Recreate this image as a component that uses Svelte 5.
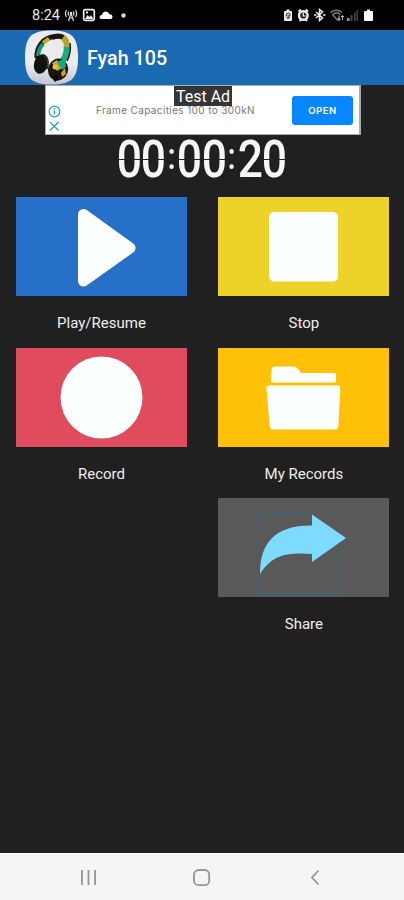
<script>
	let elapsed = '00:00:20';

	const tiles = [
		{ id: 'play', label: 'Play/Resume' },
		{ id: 'stop', label: 'Stop' },
		{ id: 'record', label: 'Record' },
		{ id: 'files', label: 'My Records' },
		{ id: 'share', label: 'Share' }
	];
</script>

<div class="screen">
	<div class="status">
		<span class="time">8:24</span>
		<svg class="left-icons" width="70" height="14" viewBox="0 0 70 14">
			<g fill="none" stroke="#ddd" stroke-width="1.2">
				<path d="M2.5 2Q.3 5.5 2.5 9M11.500 2Q13.700 5.500 11.500 9M4.700 3.500Q3.600 5.500 4.700 7.500M9.300 3.500Q10.400 5.500 9.300 7.500" />
				<path d="M7 5L4.500 13M7 5l2.500 8M5.500 10h3" />
			</g>
			<circle cx="7" cy="5" r="1.300" fill="#ddd" />
			<rect x="19.700" y="1.700" width="10.600" height="10.600" rx="1.500" fill="none" stroke="#eee" stroke-width="1.700" />
			<path d="M21 11l2.500-4 2 2 1.500-2 2.500 4zM22 3.500h2v2h-2z" fill="#eee" />
			<path d="M37.500 11q-2 0-2-2t2.500-2q.7-3.500 4-3.500 2.500 0 3.300 2.800 3.200.2 3.200 2.700 0 2-2 2z" fill="#fff" />
			<circle cx="59.500" cy="7.500" r="2.200" fill="#ddd" />
		</svg>
		<svg class="right-icons" width="94" height="14" viewBox="0 0 94 14">
			<path d="M4 3h1.500V1.500h3V3H10q1 0 1 1v8q0 1-1 1H4q-1 0-1-1V4q0-1 1-1z" fill="#eee" />
			<path d="M5 8.500Q5 5 7.300 5T9 8.500M7.200 7v3H5.500M7.200 10H9" fill="none" stroke="#222" />
			<circle cx="22.300" cy="7.500" r="4.300" fill="#222" stroke="#eee" stroke-width="2.400" />
			<path d="M17.500 3.500l2.300-2M27 3.500l-2.300-2M18.500 13l1.500-1.500M26 13l-1.500-1.500" stroke="#eee" stroke-width="1.800" />
			<path d="M22.300 5v3h2.200" fill="none" stroke="#fff" stroke-width="1.200" />
			<path d="M35 4l6.500 6L38.500 12.500V1.500l3 2.500L35 10M33 7h2.500M42 7h2.500" fill="none" stroke="#eee" stroke-width="1.500" />
			<g fill="none" stroke="#777" stroke-width="1.500">
				<path d="M49.500 4.500q6-4.500 11.500 0M51.500 6.500q4-3.500 8 0M51.500 6.500l5 5.500 2-2" />
			</g>
			<path d="M58 7.500v5M56.500 11l1.500 1.500 1.500-1.500M61.500 12V7.500M60 9l1.500-1.500L63 9" fill="none" stroke="#bbb" />
			<path d="M66 10h2.500v3H66z" fill="#999" />
			<path d="M69.500 7h2v6h-2zM73 4.500h1.700V13H73zM75.500 2H77v11h-1.500z" fill="#444" />
			<path d="M84 3h2V1.500h3V3h2q1 0 1 1v8q0 1-1 1h-7q-1 0-1-1V4q0-1 1-1z" fill="#fff" />
		</svg>
	</div>

	<header>
		<svg class="logo" width="55" height="55" viewBox="0 0 55 55">
			<defs>
				<linearGradient id="plate" x1="0" y1="0" x2="0" y2="1">
					<stop offset="0" stop-color="#e9e9ee" />
					<stop offset=".6" stop-color="#ededf0" />
					<stop offset="1" stop-color="#c3c4d0" />
				</linearGradient>
			</defs>
			<path d="M27.500.5C48 .5 54 7 54 27.500S48 54.500 27.500 54.500 1 48 1 27.500 7 .5 27.500.5z" fill="url(#plate)" />
			<g fill="none" stroke-width="5">
				<path d="M13 28C12 17 20 7 31 6.500" stroke="#171611" />
				<path d="M14 26Q14.500 19 19 14" stroke="#16977c" stroke-width="4" />
				<path d="M19 13L25 8.500" stroke="#c2a92d" stroke-width="4" />
				<path d="M28 7.500Q35 4.500 40 8" stroke="#161711" />
				<path d="M39 7.500Q44 11 42.500 20" stroke="#b6a22c" stroke-width="6" />
				<path d="M43 17Q43 26 36 34" stroke="#16ad83" stroke-width="6" />
				<path d="M46 13Q47.500 22 43 31" stroke="#111c17" stroke-width="1.500" />
			</g>
			<ellipse cx="17" cy="34" rx="7" ry="10" transform="rotate(15 17 34)" fill="#111" />
			<path d="M20 25q6 4 3 14" fill="none" stroke="#29372f" stroke-width="2" />
			<ellipse cx="34" cy="39.500" rx="10" ry="11" transform="rotate(20 34 39.500)" fill="#17150e" />
			<path d="M28 33l5-3 5 8-5 3zM37 43l4-5 1 6-4 3z" fill="#c8a52b" />
			<path d="M33 32l8-4 1 9-4 3z" fill="#16a77f" />
			<circle cx="31" cy="37" r="2.500" fill="#efbd42" />
			<path d="M28 48l4-3 3 4-4 3z" fill="#070707" />
		</svg>
		<h1>Fyah 105</h1>
	</header>

	<div class="ad">
		<svg class="ad-marks" width="14" height="28" viewBox="0 0 14 28" fill="none" stroke="#24a9b8">
			<circle cx="6.500" cy="6.500" r="5.300" stroke-width="1.200" />
			<path d="M6.500 5.500v4M6.500 3v1.400" stroke-width="1.600" />
			<path d="M2 17l8.500 8.500M10.500 17L2 25.500" stroke-width="1.400" />
		</svg>
		<span class="ad-text">Frame Capacities 100 to 300kN</span>
		<button class="open">OPEN</button>
		<span class="test">Test Ad</span>
	</div>

	<div class="timer">
		{#each elapsed.split('') as char}
			<span class:colon={char === ':'} class:zero={char === '0'}>{char}</span>
		{/each}
	</div>

	<main>
		{#each tiles as tile}
			<div class="item {tile.id}">
				<div class="tile">
					<svg width="171" height="99" viewBox="0 0 171 99">
						{#if tile.id === 'play'}
							<path d="M67.500 17.500L114 51 67.500 84z" fill="#fcffff" stroke="#fcffff" stroke-width="11" stroke-linejoin="round" />
						{:else if tile.id === 'stop'}
							<rect x="51" y="15" width="69" height="69.500" rx="5" fill="#fcffff" />
						{:else if tile.id === 'record'}
							<circle cx="85.500" cy="49.500" r="41" fill="#fcffff" />
						{:else if tile.id === 'files'}
							<path d="M53 34.500l.7-13q.2-3 3.200-3h19q2 0 3.500 2l4 4.500H116q2 0 2 2v7.500z" fill="#fcffff" />
							<path d="M50.500 37.500h69q3 0 2.800 3l-2 38q-.3 3-3.300 3H55q-3 0-3.200-3l-3.300-38q-.3-3 2-3z" fill="#fcffff" />
						{:else}
							<path d="M40 32V15H94M40 80V96h82V55" fill="none" stroke="#49616f" stroke-width="2" />
							<path d="M42 76C42 44 58 27 94 27.500V16.500L128 40 94 64V56C69 54 54 57 42 76z" fill="#7cdbff" />
						{/if}
					</svg>
				</div>
				<p>{tile.label}</p>
			</div>
		{/each}
	</main>

	<nav>
		<svg width="404" height="46" viewBox="0 0 404 46" fill="none" stroke="#949494" stroke-width="1.800">
			<path d="M82 16v15M88.500 16v15M95 16v15" />
			<rect x="194" y="16" width="15.200" height="15.200" rx="4.800" />
			<path d="M318.500 16.500L312 23.500l6.500 7" />
		</svg>
	</nav>
</div>

<style>
	:global(body) {
		margin: 0;
		background: #202020;
	}

	.screen {
		width: 404px;
		height: 900px;
		display: flex;
		flex-direction: column;
		overflow: hidden;
		background: #202020;
		color: #fff;
		font-family: Roboto, sans-serif;
	}

	svg {
		display: block;
	}

	.status {
		height: 30px;
		display: flex;
		align-items: center;
		background: #000;
		padding: 0 29px 0 32px;
		box-sizing: border-box;
	}

	.time {
		width: 32px;
		font-size: 14.500px;
		color: #e8e8e8;
	}

	.right-icons {
		margin-left: auto;
	}

	header {
		height: 55px;
		display: flex;
		align-items: center;
		background: #1a6ab2;
		padding-left: 24px;
	}

	h1 {
		margin: 2px 0 0 8px;
		font-size: 19.700px;
		font-weight: 500;
		line-height: 24px;
	}

	.ad {
		position: relative;
		width: 316px;
		height: 50px;
		margin-left: 45px;
		box-sizing: border-box;
		border: 1px solid #aaa;
		border-width: 1px 2px 1px 1px;
		background: #fff;
		display: flex;
		align-items: center;
		padding: 0 6px 0 2px;
	}

	.ad-marks {
		margin-top: 18px;
	}

	.ad-text {
		margin: 0 0 1px 34px;
		font-family: Inter, sans-serif;
		font-size: 10px;
		letter-spacing: 0.37px;
		color: #777;
		white-space: nowrap;
	}

	.open {
		width: 61px;
		height: 29px;
		margin-left: auto;
		padding: 0;
		border: 0;
		border-radius: 3px;
		background: #0787ff;
		color: #fff;
		font: 600 9.500px Inter, sans-serif;
		letter-spacing: 0.5px;
	}

	.test {
		position: absolute;
		left: 128px;
		top: 0;
		width: 58px;
		height: 20px;
		background: #353535;
		font-size: 16px;
		line-height: 21px;
		text-align: center;
	}

	.timer {
		height: 62px;
		display: flex;
		justify-content: center;
		align-items: flex-start;
		padding-right: 1px;
		font-size: 51px;
		font-weight: 500;
		line-height: 49px;
		color: #f6f6f6;
	}

	.timer span {
		width: 24.500px;
		display: flex;
		justify-content: center;
		transform: scaleX(0.87);
	}

	.timer .colon {
		width: 11.500px;
		font-size: 36px;
		line-height: 44px;
	}

	/* gap between the upper and lower segments */
	.timer .zero {
		mask-image: linear-gradient(#000 23.500px, transparent 23.500px, transparent 25px, #000 25px);
	}

	main {
		display: grid;
		grid-template-columns: 171px 171px;
		column-gap: 31.400px;
		grid-auto-rows: 150.500px;
		padding-left: 16px;
		flex: 1;
		align-content: start;
	}

	.share {
		grid-column: 2;
	}

	.tile {
		height: 99px;
	}

	.play .tile {
		background: #2770ca;
	}

	.stop .tile {
		background: #ecd229;
	}

	.record .tile {
		background: #e14b5e;
	}

	.files .tile {
		background: #ffc107;
	}

	.share .tile {
		background: #595959;
	}

	p {
		margin: 16px 0 0;
		font-size: 15px;
		line-height: 22px;
		text-align: center;
		color: #eee;
	}

	nav {
		height: 46px;
		border-top: 1px solid #fff;
		background: #f5f5f5;
	}
</style>
